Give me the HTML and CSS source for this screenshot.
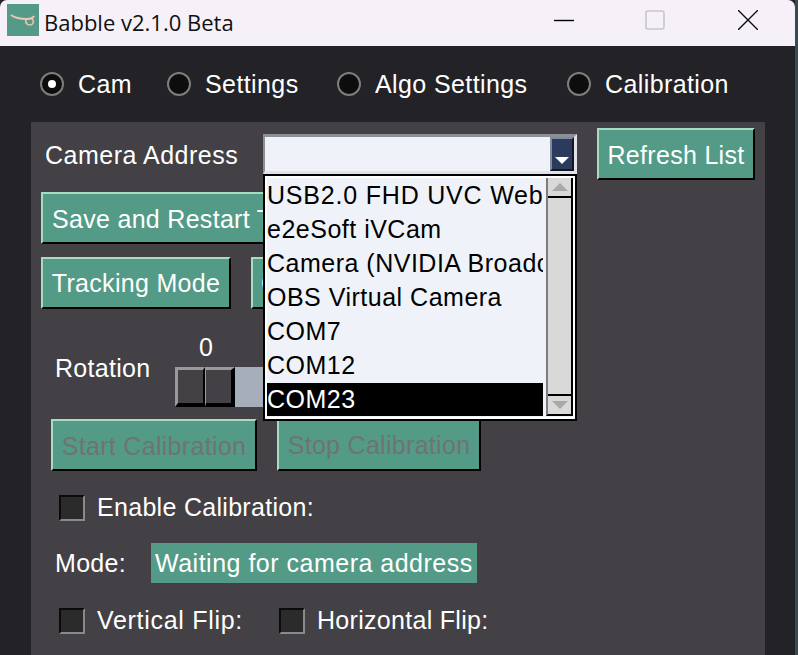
FILE: index.html
```html
<!DOCTYPE html>
<html>
<head>
	<meta charset="utf-8">
	<title>Babble v2.1.0 Beta</title>
	<link rel="stylesheet" href="styles.css">
</head>
<body>
	<header class="titlebar">
		<svg class="app-icon" viewBox="0 0 32 32">
			<rect width="32" height="32" fill="#539b86"/>
			<path d="M4 11C8 14 14 15 20 15C23 15 26 14 27 12" fill="none" stroke="#f0c4b8" stroke-width="2"/>
			<path d="M19 15C18 19 20 21 23 21C26 21 27 18 26 16C25.5 15 24.5 14.5 24 14.5" fill="none" stroke="#f0c4b8" stroke-width="1.6"/>
		</svg>
		<span class="app-title">Babble v2.1.0 Beta</span>
		<div class="win-controls">
			<svg class="win-btn" viewBox="0 0 20 20"><path d="M0 10.5H20" stroke="#000" stroke-width="1.4"/></svg>
			<svg class="win-btn" viewBox="0 0 20 20"><rect x="1" y="1" width="18" height="18" rx="2" fill="none" stroke="#c9c6cb" stroke-width="1.6"/></svg>
			<svg class="win-btn" viewBox="0 0 20 20"><path d="M0 0L20 20M20 0L0 20" stroke="#111" stroke-width="1.4"/></svg>
		</div>
	</header>

	<nav class="tabs">
		<label class="tab tab-cam"><span class="radio on"></span>Cam</label>
		<label class="tab tab-settings"><span class="radio"></span>Settings</label>
		<label class="tab tab-algo"><span class="radio"></span>Algo Settings</label>
		<label class="tab"><span class="radio"></span>Calibration</label>
	</nav>

	<main class="panel">
		<div class="row row-address">
			<span class="address-label">Camera Address</span>
			<div class="combo">
				<div class="combo-field">
					<span class="combo-arrow"><i></i></span>
				</div>
				<div class="combo-list">
					<ul class="items">
						<li>USB2.0 FHD UVC WebCam</li>
						<li>e2eSoft iVCam</li>
						<li>Camera (NVIDIA Broadcast)</li>
						<li>OBS Virtual Camera</li>
						<li>COM7</li>
						<li>COM12</li>
						<li class="selected">COM23</li>
					</ul>
					<div class="scrollbar">
						<span class="scroll-btn"><i class="up"></i></span>
						<span class="scroll-trough"></span>
						<span class="scroll-btn"><i class="down"></i></span>
					</div>
				</div>
			</div>
			<button class="btn btn-refresh">Refresh List</button>
		</div>

		<div class="row row-save">
			<button class="btn btn-save">Save and Restart Tracking</button>
		</div>

		<div class="row row-modes">
			<button class="btn btn-mode">Tracking Mode</button>
			<button class="btn btn-mode">Cropping Mode</button>
		</div>

		<div class="row row-rotation">
			<span class="rotation-label">Rotation</span>
			<div class="slider">
				<span class="slider-value">0</span>
				<div class="slider-track">
					<span class="slider-handle"></span>
					<span class="slider-handle"></span>
				</div>
			</div>
		</div>

		<div class="row row-calib">
			<button class="btn btn-start" disabled>Start Calibration</button>
			<button class="btn btn-stop" disabled>Stop Calibration</button>
		</div>

		<label class="row check-row row-enable"><span class="check"></span>Enable Calibration:</label>

		<div class="row row-mode-status">
			<span class="mode-label">Mode:</span>
			<span class="mode-value">Waiting for camera address</span>
		</div>

		<div class="row row-flips">
			<label class="check-row flip-v"><span class="check"></span>Vertical Flip:</label>
			<label class="check-row"><span class="check"></span>Horizontal Flip:</label>
		</div>
	</main>
</body>
</html>
```

FILE: styles.css
```css
* {
	box-sizing: border-box;
}
html, body {
	margin: 0;
	height: 655px;
	overflow: hidden;
}
html {
	background-color: #3a4a4e;
}
body {
	width: 795px;
	background-color: #232226;
	color: #fff;
	font-family: "Liberation Sans", Arial, sans-serif;
	font-size: 25px;
	letter-spacing: 0.3px;
	display: flex;
	flex-direction: column;
}

/* title bar */
.titlebar {
	height: 46px;
	flex: none;
	display: flex;
	align-items: center;
	background-color: #f6f0f8;
	border-radius: 7px 7px 0 0;
	color: #111;
	padding: 0 37px 7px 7px;
}
.app-icon {
	width: 32px;
	height: 32px;
	margin-top: 1px;
}
.app-title {
	margin: 5px 0 0 5px;
	font-family: "Open Sans", sans-serif;
	font-size: 22px;
	letter-spacing: 0;
}
.win-controls {
	margin-left: auto;
	display: flex;
	align-items: center;
	gap: 71px;
}
.win-btn {
	width: 20px;
	height: 20px;
	display: block;
}
.win-btn:last-child {
	margin-left: 2px;
}

/* tabs */
.tabs {
	height: 76px;
	flex: none;
	display: flex;
	align-items: center;
	padding-left: 40px;
	letter-spacing: 0.4px;
}
.tab {
	display: flex;
	align-items: center;
	gap: 14px;
}
.tab-cam {
	width: 127px;
}
.tab-settings {
	width: 170px;
}
.tab-algo {
	width: 230px;
}
.radio {
	width: 24px;
	height: 24px;
	border-radius: 50%;
	border: 2px solid #7d7d7f;
	background-color: #0d0d0d;
	display: flex;
	align-items: center;
	justify-content: center;
}
.radio.on::after {
	content: "";
	width: 8px;
	height: 8px;
	border-radius: 50%;
	background-color: #fff;
}

/* main panel */
.panel {
	flex: 1;
	margin: 0 30px 0 31px;
	padding: 6px 0 0 10px;
	background-color: #434145;
}
.row {
	display: flex;
	align-items: center;
}
.btn {
	font: inherit;
	letter-spacing: inherit;
	color: #fff;
	height: 52px;
	padding: 0 8px;
	white-space: nowrap;
	background-color: #539b86;
	border-style: solid;
	border-width: 2px;
	border-color: #a6dcc0 #000 #000 #a6dcc0;
}
.btn:disabled {
	color: #6f7372;
}

.row-address {
	align-items: flex-start;
	position: relative;
	z-index: 2;
}
.address-label {
	margin: 13px 0 0 4px;
	width: 218px;
	letter-spacing: 0.5px;
}
.combo {
	position: relative;
	width: 314px;
	margin-top: 6px;
}
.combo-field {
	height: 40px;
	display: flex;
	justify-content: flex-end;
	background-color: #eff3f9;
	border-style: solid;
	border-width: 3px 3px 3px 2px;
	border-color: #8c8f96 #dfe3e9 #dfe3e9 #8c8f96;
}
.combo-arrow {
	width: 24px;
	background-color: #2a3b5e;
	border-style: solid;
	border-width: 2px;
	border-color: #7f8aa0 #15171c #15171c #7f8aa0;
	display: flex;
	align-items: flex-end;
	justify-content: center;
	padding-bottom: 5px;
}
.combo-arrow i {
	border-top: 7px solid #fff;
	border-left: 7px solid transparent;
	border-right: 7px solid transparent;
}
.combo-list {
	position: absolute;
	left: 0;
	right: 0;
	top: 100%;
	height: 247px;
	display: flex;
	background-color: #eff3f9;
	border: 2px solid #000;
	outline: 2px solid #fff;
	outline-offset: -4px;
	padding: 3px 2px;
	color: #000;
	letter-spacing: 0.5px;
}
.items {
	list-style: none;
	margin: 0 3px 0 0;
	padding: 0;
	width: 276px;
	flex: none;
	overflow: hidden;
}
.items li {
	height: 34px;
	line-height: 33px;
	white-space: nowrap;
	overflow: hidden;
}
.items li:first-child {
	letter-spacing: 0.8px;
}
.items .selected {
	background-color: #000;
	color: #fff;
}
.scrollbar {
	flex: 1;
	margin-top: -1px;
	display: flex;
	flex-direction: column;
	background-color: #d9d9d9;
	border-left: 2px solid #7d7d7d;
	border-right: 2px solid #000;
	border-bottom: 2px solid #000;
}
.scroll-btn {
	height: 18px;
	flex: none;
	display: flex;
	align-items: center;
	justify-content: center;
}
.scroll-trough {
	flex: 1;
	border-top: 2px solid #000;
	border-bottom: 2px solid #000;
}
.scroll-btn .up {
	border-bottom: 8px solid #a9a9a9;
	border-left: 8px solid transparent;
	border-right: 8px solid transparent;
}
.scroll-btn .down {
	border-top: 8px solid #a9a9a9;
	border-left: 8px solid transparent;
	border-right: 8px solid transparent;
}
.btn-refresh {
	margin-left: 20px;
	width: 158px;
	padding-top: 2px;
}

.row-save {
	margin-top: 12px;
}
.btn-save {
	width: 300px;
	text-align: left;
	padding: 2px 0 0 9px;
}

.row-modes {
	margin-top: 13px;
	gap: 20px;
}
.btn-mode {
	width: 190px;
}

.row-rotation {
	margin-top: 18px;
	align-items: flex-end;
	padding-left: 14px;
}
.rotation-label {
	width: 120px;
	margin-bottom: 24px;
}
.slider {
	display: flex;
	flex-direction: column;
	align-items: flex-start;
}
.slider-value {
	margin-left: 24px;
	line-height: 40px;
}
.slider-track {
	width: 200px;
	height: 40px;
	display: flex;
	background-color: #a5aeb9;
}
.slider-handle {
	height: 40px;
	width: 30px;
	background-color: #434145;
	border-style: solid;
	border-color: #9a9a9a #000 #000 #9a9a9a;
	border-width: 3px 2px 4px 3px;
}
.slider-handle:last-child {
	border-width: 3px 4px 4px 1px;
}

.row-calib {
	margin-top: 12px;
	padding-left: 10px;
	gap: 20px;
}
.btn-start {
	width: 206px;
	padding-top: 2px;
}
.btn-stop {
	width: 204px;
}

.check-row {
	display: flex;
	align-items: center;
	gap: 12px;
}
.check {
	width: 26px;
	height: 26px;
	flex: none;
	background-color: #2b2b2b;
	border-style: solid;
	border-width: 2px;
	border-color: #0b0b0b #8a8a8a #8a8a8a #0b0b0b;
}
.row-enable {
	margin-top: 22px;
	margin-left: 18px;
}
.row-mode-status {
	margin-top: 21px;
	padding-left: 14px;
}
.mode-label {
	width: 96px;
}
.mode-value {
	height: 40px;
	width: 326px;
	line-height: 40px;
	padding-left: 4px;
	white-space: nowrap;
	letter-spacing: 0.5px;
	background-color: #539b86;
}
.row-flips {
	margin-top: 23px;
	margin-left: 18px;
}
.flip-v {
	width: 220px;
	letter-spacing: 0.7px;
}
```
